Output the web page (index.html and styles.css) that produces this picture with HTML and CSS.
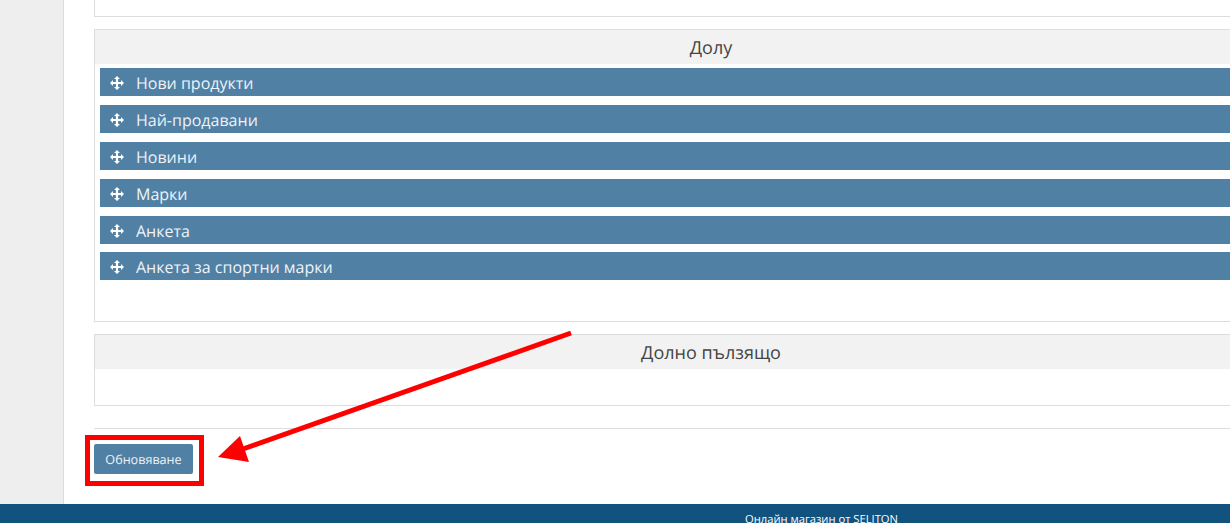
FILE: index.html
```html
<!DOCTYPE html>
<html lang="bg">
<head>
<meta charset="utf-8">
<title>Обновяване</title>
<link rel="stylesheet" href="styles.css">
</head>
<body>
<div class="layout">
  <aside class="sidebar"></aside>
  <main class="content">
    <div class="panel panel-top"></div>
    <section class="panel panel-down">
      <h3 class="panel-title">Долу</h3>
      <ul class="rows">
        <li class="row"><svg class="move" viewBox="0 0 14 14"><use href="#move"/></svg>Нови продукти</li>
        <li class="row"><svg class="move" viewBox="0 0 14 14"><use href="#move"/></svg>Най-продавани</li>
        <li class="row"><svg class="move" viewBox="0 0 14 14"><use href="#move"/></svg>Новини</li>
        <li class="row"><svg class="move" viewBox="0 0 14 14"><use href="#move"/></svg>Марки</li>
        <li class="row"><svg class="move" viewBox="0 0 14 14"><use href="#move"/></svg>Анкета</li>
        <li class="row row-last"><svg class="move" viewBox="0 0 14 14"><use href="#move"/></svg>Анкета за спортни марки</li>
      </ul>
    </section>
    <section class="panel panel-slider">
      <h3 class="panel-title">Долно пълзящо</h3>
    </section>
    <hr class="divider">
    <button class="btn" type="button">Обновяване</button>
  </main>
</div>
<footer class="footer">Онлайн магазин от SELITON</footer>

<div class="highlight"></div>
<svg class="arrow" viewBox="0 0 1230 523">
  <path d="M571 333 L243 449" stroke="#ff0000" stroke-width="5" fill="none"/>
  <path d="M218 457 L240 436 L249 462 Z" fill="#ff0000"/>
</svg>

<svg class="defs" width="0" height="0">
  <symbol id="move" viewBox="0 0 14 14">
    <path fill="#fff" d="M7 0 L10 3 L8.1 3 L8.1 5.9 L11 5.9 L11 4 L14 7 L11 10 L11 8.1 L8.1 8.1 L8.1 11 L10 11 L7 14 L4 11 L5.9 11 L5.9 8.1 L3 8.1 L3 10 L0 7 L3 4 L3 5.9 L5.9 5.9 L5.9 3 L4 3 Z"/>
  </symbol>
</svg>
</body>
</html>
```

FILE: styles.css
```css
* { box-sizing: border-box; }
html, body { margin: 0; height: 523px; overflow: hidden; background: #fff; }
body {
  position: relative;
  font-family: "Open Sans", "Noto Sans", sans-serif;
  color: #444;
  text-rendering: geometricPrecision;
}
.layout { display: flex; height: 504px; overflow: hidden; }
.sidebar {
  flex: 0 0 64px;
  background: #eee;
  border-right: 1px solid #ddd;
}
.content { flex: 0 0 1264px; padding-left: 30px; }
.panel { border: 1px solid #ddd; background: #fff; }
.panel-top { height: 17px; border-top: 0; margin-bottom: 12px; }
.panel-down { height: 293px; margin-bottom: 12px; }
.panel-slider { height: 72px; }
.panel-title {
  margin: 0;
  height: 34px;
  background: #f2f2f2;
  font-weight: 400;
  font-size: 18px;
  line-height: 36px;
  text-align: center;
  color: #444;
}
.rows { list-style: none; margin: 4px 0 0; padding: 0 0 0 5px; }
.row {
  display: flex;
  align-items: center;
  height: 28px;
  margin-bottom: 9px;
  padding: 2px 0 0 10px;
  background: #5180a5;
  color: #eef3f7;
  font-size: 16px;
}
.row-last { margin-top: -1px; }
.move { width: 14px; height: 14px; margin-right: 12px; flex: none; }
.divider { border: 0; border-top: 1px solid #ddd; margin: 22px 0 15px; height: 0; }
.btn {
  display: block;
  width: 99px;
  height: 30px;
  padding: 0;
  border: 0;
  border-radius: 2px;
  background: #5180a5;
  color: #eef3f7;
  font-family: inherit;
  font-size: 12.6px;
  text-rendering: geometricPrecision;
}
.footer {
  height: 19px;
  background: #12527f;
  color: #fff;
  font-size: 11.2px;
  line-height: 15px;
  padding-top: 8px;
  padding-left: 745px;
  overflow: hidden;
  white-space: nowrap;
}
.highlight {
  position: absolute;
  left: 85px;
  top: 435px;
  width: 119px;
  height: 51px;
  border: 5px solid #ff0000;
}
.arrow { position: absolute; left: 0; top: 0; width: 1230px; height: 523px; pointer-events: none; }
.defs { position: absolute; }
```
